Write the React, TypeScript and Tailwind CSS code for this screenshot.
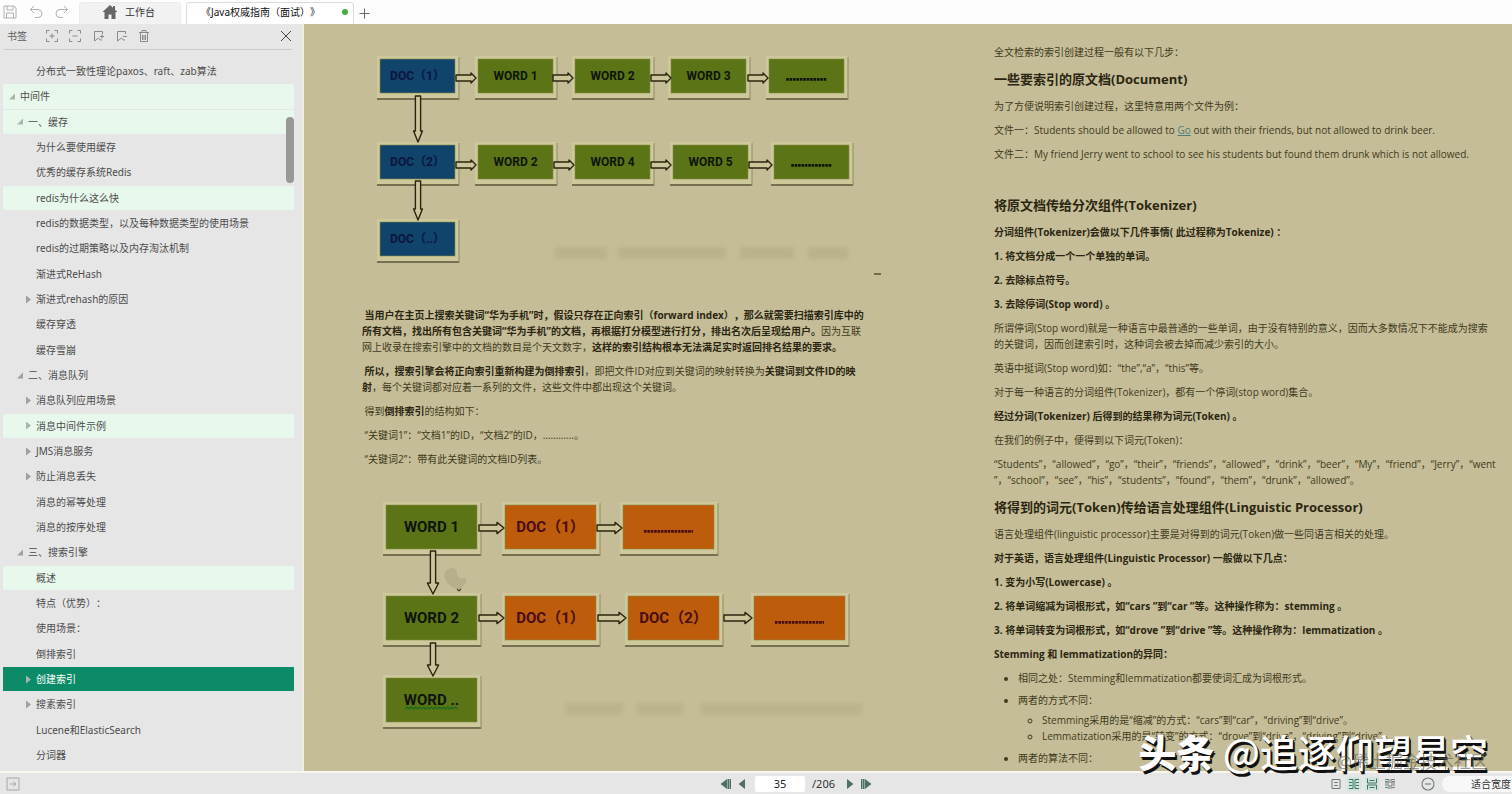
import type { ReactNode } from "react";

type Level = 0 | 1 | 2;
type Row = { text: string; level: Level; arrow?: "open" | "closed"; tone?: "mark" | "active" };

const rows: Row[] = [
  { text: "分布式一致性理论paxos、raft、zab算法", level: 2 },
  { text: "中间件", level: 0, arrow: "open", tone: "mark" },
  { text: "一、缓存", level: 1, arrow: "open", tone: "mark" },
  { text: "为什么要使用缓存", level: 2 },
  { text: "优秀的缓存系统Redis", level: 2 },
  { text: "redis为什么这么快", level: 2, tone: "mark" },
  { text: "redis的数据类型，以及每种数据类型的使用场景", level: 2 },
  { text: "redis的过期策略以及内存淘汰机制", level: 2 },
  { text: "渐进式ReHash", level: 2 },
  { text: "渐进式rehash的原因", level: 2, arrow: "closed" },
  { text: "缓存穿透", level: 2 },
  { text: "缓存雪崩", level: 2 },
  { text: "二、消息队列", level: 1, arrow: "open" },
  { text: "消息队列应用场景", level: 2, arrow: "closed" },
  { text: "消息中间件示例", level: 2, arrow: "closed", tone: "mark" },
  { text: "JMS消息服务", level: 2, arrow: "closed" },
  { text: "防止消息丢失", level: 2, arrow: "closed" },
  { text: "消息的幂等处理", level: 2 },
  { text: "消息的按序处理", level: 2 },
  { text: "三、搜索引擎", level: 1, arrow: "open" },
  { text: "概述", level: 2, tone: "mark" },
  { text: "特点（优势）：", level: 2 },
  { text: "使用场景：", level: 2 },
  { text: "倒排索引", level: 2 },
  { text: "创建索引", level: 2, arrow: "closed", tone: "active" },
  { text: "搜素索引", level: 2, arrow: "closed" },
  { text: "Lucene和ElasticSearch", level: 2 },
  { text: "分词器", level: 2 },
];

const indent = { 0: "pl-[5px]", 1: "pl-[13px]", 2: "pl-[21px]" };
const tones = {
  none: "text-[#4c4c4c]",
  mark: "rounded-xs bg-[#e8f8ec] text-[#4c4c4c]",
  active: "bg-[#0c8b68] text-white",
};

function OutlineRow({ text, level, arrow, tone }: Row) {
  return (
    <li className="flex min-h-0 flex-1 pb-px">
      <button type="button" className={`flex w-full items-center text-left whitespace-nowrap ${indent[level]} ${tones[tone ?? "none"]}`}>
        <svg width="12" height="9" viewBox="0 0 12 9" className="shrink-0" fill={tone ? "#a9b5ab" : "#a0a0a0"} aria-hidden="true">
          {arrow === "open" && <path d="M7 1.5v6H1z" />}
          {arrow === "closed" && <path d="M2 0.5v8l5-4z" />}
        </svg>
        {text}
      </button>
    </li>
  );
}

function ToolButton({ label, children }: { label: string; children: ReactNode }) {
  return (
    <button type="button" aria-label={label} className="shrink-0">
      <svg width="14" height="14" viewBox="0 0 14 14" fill="none" stroke="currentColor" strokeWidth="1">
        {children}
      </svg>
    </button>
  );
}

function Box({ x, y, w, h, fill, ink, label, size, wavy }: { x: number; y: number; w: number; h: number; fill: string; ink: string; label: string; size: number; wavy?: boolean }) {
  const dots = label === "dots";
  const cx = x + w / 2;
  return (
    <g>
      <rect x={x - 3} y={y - 3} width={w + 7} height={h + 8} fill="#cdc99c" />
      <path d={`M${x - 3} ${y + h + 6}H${x + w + 4}`} stroke="#777050" strokeWidth="2" />
      <path d={`M${x + w + 4} ${y - 2}V${y + h + 7}`} stroke="#8f8a63" strokeWidth="1" />
      <rect x={x} y={y} width={w} height={h} fill={fill} stroke="#8b8a45" strokeWidth="0.6" />
      {dots ? (
        <path d={`M${cx - w * 0.27} ${y + h * 0.6}H${cx + w * 0.27}`} stroke={ink} strokeWidth="2.8" strokeDasharray="2.6 0.8" />
      ) : (
        <text x={cx} y={y + h / 2 + size * 0.36} fontSize={size} fontWeight="700" textAnchor="middle" fill={ink}>
          {label}
        </text>
      )}
      {wavy && (
        <path d={`M${cx - 26} ${y + 31}${"l2 -2l2 2".repeat(13)}`} stroke="#176b1d" strokeWidth="1.2" fill="none" />
      )}
    </g>
  );
}

function Arrow({ x, y, len, down, big }: { x: number; y: number; len: number; down?: boolean; big?: boolean }) {
  const b = down ? 2.6 : 3;
  const s = big ? 5.6 : down ? 4.4 : 5;
  const head = down ? 11 : big ? 7 : 5;
  const n = len - head;
  const d = down
    ? `M${x - b} ${y}h${2 * b}v${n}h${s - b}l${-s} ${head}l${-s} ${-head}h${s - b}z`
    : `M${x} ${y - b}h${n}v${b - s}l${head} ${s}l${-head} ${s}v${b - s}h${-n}z`;
  return <path d={d} fill="#cdc69c" stroke="#2a240e" strokeWidth="1.4" strokeLinejoin="round" />;
}

const BLUE = "#10446a";
const GREEN = "#5a7416";
const ORANGE = "#bd5d0c";
const NAVY = "#0d1440";
const BLACK = "#10150a";
const MAROON = "#4a0d12";
const diagramFont = "[font-family:Roboto,'Noto_Sans_CJK_SC',sans-serif]";

function ForwardIndex() {
  const s = { w: 75, h: 34, size: 12 };
  return (
    <svg width="520" height="275" viewBox="362 24 520 275" className={`mb-2 block overflow-visible ${diagramFont}`} role="img" aria-label="正向索引">
      <Box {...s} x={380} y={59} fill={BLUE} ink={NAVY} label="DOC（1）" />
      <Box {...s} x={478} y={59} fill={GREEN} ink={BLACK} label="WORD 1" />
      <Box {...s} x={575} y={59} fill={GREEN} ink={BLACK} label="WORD 2" />
      <Box {...s} x={671} y={59} fill={GREEN} ink={BLACK} label="WORD 3" />
      <Box {...s} x={769} y={59} fill={GREEN} ink={BLACK} label="dots" />
      <Box {...s} x={380} y={145} fill={BLUE} ink={NAVY} label="DOC（2）" />
      <Box {...s} x={478} y={145} fill={GREEN} ink={BLACK} label="WORD 2" />
      <Box {...s} x={575} y={145} fill={GREEN} ink={BLACK} label="WORD 4" />
      <Box {...s} x={673} y={145} fill={GREEN} ink={BLACK} label="WORD 5" />
      <Box {...s} x={774} y={145} fill={GREEN} ink={BLACK} label="dots" />
      <Box {...s} x={380} y={222} fill={BLUE} ink={NAVY} label="DOC（..）" />
      <Arrow x={456} y={78} len={20} />
      <Arrow x={553} y={78} len={20} />
      <Arrow x={651} y={78} len={20} />
      <Arrow x={748} y={78} len={20} />
      <Arrow x={456} y={165} len={20} />
      <Arrow x={554} y={165} len={20} />
      <Arrow x={651} y={165} len={20} />
      <Arrow x={749} y={165} len={23} />
      <Arrow x={418} y={96} len={46} down />
      <Arrow x={418} y={181} len={39} down />
      <g fill="#b5ae88" className="opacity-70 blur-[2px]">
        <rect x="555" y="247" width="52" height="12" />
        <rect x="618" y="247" width="108" height="12" />
        <rect x="740" y="247" width="54" height="12" />
        <rect x="808" y="247" width="40" height="12" />
      </g>
      <path d="M874 274h7" stroke="#5a5022" strokeWidth="1.5" />
    </svg>
  );
}

function InvertedIndex() {
  const s = { w: 91, h: 44, size: 15 };
  return (
    <svg width="520" height="270" viewBox="362 475 520 270" className={`block overflow-visible ${diagramFont}`} role="img" aria-label="倒排索引">
      <Box {...s} x={386} y={505} fill={GREEN} ink={BLACK} label="WORD 1" />
      <Box {...s} x={505} y={505} fill={ORANGE} ink={MAROON} label="DOC（1）" />
      <Box {...s} x={623} y={505} fill={ORANGE} ink={MAROON} label="dots" />
      <Box {...s} x={386} y={596} fill={GREEN} ink={BLACK} label="WORD 2" />
      <Box {...s} x={505} y={596} fill={ORANGE} ink={MAROON} label="DOC（1）" />
      <Box {...s} x={628} y={596} fill={ORANGE} ink={MAROON} label="DOC（2）" />
      <Box {...s} x={754} y={596} fill={ORANGE} ink={MAROON} label="dots" />
      <Box {...s} x={386} y={678} fill={GREEN} ink={BLACK} label="WORD .." wavy />
      <Arrow x={479} y={528} len={25} big />
      <Arrow x={597} y={528} len={25} big />
      <Arrow x={479} y={618} len={25} big />
      <Arrow x={598} y={618} len={28} big />
      <Arrow x={724} y={618} len={28} big />
      <Arrow x={433} y={551} len={43} down big />
      <Arrow x={433} y={643} len={33} down big />
      <path d="M448 569c4-2 9-1 9 3c-1 5 3 7 8 6c3 2 1 7-3 8c1 2-1 4-4 3c-6-1-11-5-12-9c-3-4-2-9 2-11z" fill="#b0aa88" className="opacity-70" />
      <path d="M457 589l2 2l2-2" stroke="#5a3a22" strokeWidth="1.2" fill="none" />
      <g fill="#b5ae88" className="opacity-60 blur-[2px]">
        <rect x="565" y="703" width="58" height="12" />
        <rect x="636" y="703" width="48" height="12" />
        <rect x="700" y="703" width="162" height="12" />
      </g>
    </svg>
  );
}

function P({ bold, children }: { bold?: boolean; children: ReactNode }) {
  return <p className={bold ? "mb-2 font-bold text-[#2b2611]" : "mb-2"}>{children}</p>;
}

function H({ children }: { children: ReactNode }) {
  return <h2 className="mb-2 text-[13px]/[22px] font-bold text-[#2b2611]">{children}</h2>;
}

function B({ children }: { children: ReactNode }) {
  return <strong className="font-bold text-[#2b2611]">{children}</strong>;
}

export default function App() {
  return (
    <div className="relative flex h-screen flex-col overflow-hidden bg-[#e6e6e6] font-['Noto_Sans','Noto_Sans_CJK_SC',sans-serif] text-[10px]/[16px] text-[#4c4c4c] [text-spacing-trim:space-all]">
      <header className="flex h-6 shrink-0 items-end bg-[#fdfdfd]">
        <div className="flex h-6 w-[79px] shrink-0 items-center gap-3 pb-px pl-[3px] text-[#b0b0b0]">
          <ToolButton label="保存">
            <path d="M1 1h10l2 2v10H1zM4 1v4h6V1M3.500 13V8h7v5" />
          </ToolButton>
          <ToolButton label="撤销">
            <path d="M5 1L1.500 4.500L5 8M1.500 4.500H9a4 4 0 0 1 0 8H6" />
          </ToolButton>
          <ToolButton label="重做">
            <path d="M9 1l3.500 3.500L9 8M12.500 4.500H5a4 4 0 0 0 0 8h3" />
          </ToolButton>
        </div>
        <nav className="flex items-end gap-[5px]">
          <button type="button" className="flex h-[22px] w-[102px] items-center rounded-t-sm border border-b-0 border-[#ececec] bg-[#f2f2f2] pb-[3px] pl-[22px] text-[#333]">
            <svg width="16" height="14" viewBox="0 0 16 14" fill="#666" className="mr-[7px]" aria-hidden="true">
              <path d="M8 0L0.500 7h2v7h4V9.500h3V14h4V7h2L13 4.700V1h-2v1.800z" />
            </svg>
            工作台
          </button>
          <button type="button" className="flex h-[22px] w-[168px] items-center rounded-t-sm border border-b-0 border-[#dcdcdc] bg-white pb-[3px] pl-[14px] text-[#111]">
            <span>《Java权威指南（面试）》</span>
            <span className="mr-[5px] ml-auto size-[6px] rounded-full bg-[#3fae3c]" />
          </button>
        </nav>
        <button type="button" aria-label="新建标签" className="ml-[5px] flex h-[22px] items-center text-[#666]">
          <svg width="11" height="11" viewBox="0 0 11 11" fill="none" stroke="currentColor">
            <path d="M5.500 0.500v10M0.500 5.500h10" />
          </svg>
        </button>
      </header>

      <div className="flex min-h-0 flex-1">
        <aside className="relative flex w-[304px] shrink-0 flex-col border-r-2 border-[#efece0]">
          <div className="mr-[10px] ml-1 flex h-[26px] shrink-0 items-center border-b border-[#c9c9c9] pb-px pl-[3px] text-[#8a8a8a]">
            <h1 className="mr-[18px] text-[#5c5c5c]">书签</h1>
            <div className="flex flex-1 items-center gap-[9px]">
              <ToolButton label="展开">
                <path d="M1.500 4.500v-3h3M9.500 1.500h3v3M12.500 9.500v3h-3M4.500 12.500h-3v-3M7 4.500v5M4.500 7h5" />
              </ToolButton>
              <ToolButton label="收起">
                <path d="M1.500 4.500v-3h3M9.500 1.500h3v3M12.500 9.500v3h-3M4.500 12.500h-3v-3M4.500 7h5" />
              </ToolButton>
              <ToolButton label="添加书签">
                <path d="M11.500 5V2.500h-8v9.500l4-3l2.500 2.500V10M9 7.500h4M11 5.500v4" />
              </ToolButton>
              <ToolButton label="移除书签">
                <path d="M11.500 5V2.500h-8v9.500l4-3l2.500 2.500V10M9 7.500h4" />
              </ToolButton>
              <ToolButton label="删除">
                <path d="M2 3.500h10M5 3V1.500h4V3M3.500 4v8.500h7V4M5.500 6v5M7 6v5M8.500 6v5" />
              </ToolButton>
            </div>
            <button type="button" aria-label="关闭" className="text-[#444]">
              <svg width="12" height="12" viewBox="0 0 12 12" fill="none" stroke="currentColor">
                <path d="M1 1l10 10M11 1L1 11" />
              </svg>
            </button>
          </div>
          <ul className="mt-[9px] mr-2 mb-[3px] ml-[3px] flex min-h-0 flex-1 flex-col">
            {rows.map((row) => (
              <OutlineRow key={row.text} {...row} />
            ))}
          </ul>
          <span className="absolute top-[93px] right-2 h-[66px] w-2 rounded-full bg-[#989898]" />
        </aside>

        <main className="flex min-w-0 flex-1 overflow-hidden bg-[#c5bd97] pl-[58px] font-['Open_Sans','Noto_Sans_CJK_SC',sans-serif] whitespace-nowrap text-[#3f3a1c]">
          <article className="w-[632px] shrink-0">
            <ForwardIndex />
            <P>
              {"\u00a0"}
              <B>
                当用户在主页上搜索关键词“华为手机”时，假设只存在正向索引（forward index），那么就需要扫描索引库中的
                <br />
                所有文档，找出所有包含关键词“华为手机”的文档，再根据打分模型进行打分，排出名次后呈现给用户。
              </B>
              因为互联
              <br />
              网上收录在搜索引擎中的文档的数目是个天文数字，<B>这样的索引结构根本无法满足实时返回排名结果的要求。</B>
            </P>
            <P>
              {"\u00a0"}
              <B>所以，搜索引擎会将正向索引重新构建为倒排索引</B>，即把文件ID对应到关键词的映射转换为<B>关键词到文件ID的映</B>
              <br />
              <B>射</B>，每个关键词都对应着一系列的文件，这些文件中都出现这个关键词。
            </P>
            <P>
              {"\u00a0"}得到<B>倒排索引</B>的结构如下：
            </P>
            <P>{"\u00a0"}“关键词1”：“文档1”的ID，“文档2”的ID，…………。</P>
            <P>{"\u00a0"}“关键词2”：带有此关键词的文档ID列表。</P>
            <InvertedIndex />
          </article>

          <article className="w-[520px] shrink-0 pt-5">
            <P>全文检索的索引创建过程一般有以下几步：</P>
            <H>一些要索引的原文档(Document)</H>
            <P>为了方便说明索引创建过程，这里特意用两个文件为例：</P>
            <P>
              文件一：Students should be allowed to{" "}
              <a href="#go" className="text-[#4d8078] underline">
                Go
              </a>{" "}
              out with their friends, but not allowed to drink beer.
            </P>
            <P>文件二：My friend Jerry went to school to see his students but found them drunk which is not allowed.</P>
            <P>{"\u00a0"}</P>
            <H>将原文档传给分次组件(Tokenizer)</H>
            <P bold>分词组件(Tokenizer)会做以下几件事情( 此过程称为Tokenize) ：</P>
            <P bold>1. 将文档分成一个一个单独的单词。</P>
            <P bold>2. 去除标点符号。</P>
            <P bold>3. 去除停词(Stop word) 。</P>
            <P>
              所谓停词(Stop word)就是一种语言中最普通的一些单词，由于没有特别的意义，因而大多数情况下不能成为搜索
              <br />
              的关键词，因而创建索引时，这种词会被去掉而减少索引的大小。
            </P>
            <P>英语中挺词(Stop word)如：“the”,“a”，“this”等。</P>
            <P>对于每一种语言的分词组件(Tokenizer)，都有一个停词(stop word)集合。</P>
            <P bold>经过分词(Tokenizer) 后得到的结果称为词元(Token) 。</P>
            <P>在我们的例子中，便得到以下词元(Token)：</P>
            <P>
              “Students”，“allowed”，“go”，“their”，“friends”，“allowed”，“drink”，“beer”，“My”，“friend”，“Jerry”，“went
              <br />
              ”，“school”，“see”，“his”，“students”，“found”，“them”，“drunk”，“allowed”。
            </P>
            <H>将得到的词元(Token)传给语言处理组件(Linguistic Processor)</H>
            <P>语言处理组件(linguistic processor)主要是对得到的词元(Token)做一些同语言相关的处理。</P>
            <P bold>对于英语，语言处理组件(Linguistic Processor) 一般做以下几点：</P>
            <P bold>1. 变为小写(Lowercase) 。</P>
            <P bold>2. 将单词缩减为词根形式，如“cars ”到“car ”等。这种操作称为：stemming 。</P>
            <P bold>3. 将单词转变为词根形式，如“drove ”到“drive ”等。这种操作称为：lemmatization 。</P>
            <P bold>Stemming 和 lemmatization的异同：</P>
            <ul className="flex list-disc flex-col gap-[6px] pl-6">
              <li>相同之处：Stemming和lemmatization都要使词汇成为词根形式。</li>
              <li>
                两者的方式不同：
                <ul className="mt-1 list-[circle] pl-6">
                  <li>Stemming采用的是“缩减”的方式：“cars”到“car”，“driving”到“drive”。</li>
                  <li>Lemmatization采用的是“转变”的方式：“drove”到“drive”，“driving”到“drive”。</li>
                </ul>
              </li>
              <li>两者的算法不同：</li>
            </ul>
          </article>
        </main>
      </div>

      <footer className="flex h-[23px] shrink-0 items-center border-t-2 border-[#f8f6ee]">
        <div className="flex flex-1 pl-[6px] text-[#a0a8a4]">
          <ToolButton label="侧栏">
            <path d="M1 1h12v12H1zM4 7h6M7.500 4.500L10 7L7.500 9.500" />
          </ToolButton>
        </div>
        <div className="ml-[74px] flex w-[152px] items-center text-[#4f6f69]">
          <button type="button" aria-label="第一页">
            <svg width="12" height="12" viewBox="0 0 12 12" fill="currentColor">
              <path d="M7 1v10L0.500 6zM7.500 1h1.500v10H7.500zM9.500 1h1.500v10h-1.500z" />
            </svg>
          </button>
          <button type="button" aria-label="上一页" className="ml-[6px]">
            <svg width="8" height="12" viewBox="0 0 8 12" fill="currentColor">
              <path d="M7 1v10L0.500 6z" />
            </svg>
          </button>
          <input aria-label="页码" defaultValue="35" className="ml-[9px] h-4 w-[50px] rounded-xs bg-white text-center text-[11px] text-[#222]" />
          <span className="ml-[7px] text-[11px] text-[#333]">/206</span>
          <button type="button" aria-label="下一页" className="ml-auto">
            <svg width="8" height="12" viewBox="0 0 8 12" fill="currentColor">
              <path d="M1 1v10L7.500 6z" />
            </svg>
          </button>
          <button type="button" aria-label="最后一页" className="ml-[6px]">
            <svg width="12" height="12" viewBox="0 0 12 12" fill="currentColor">
              <path d="M5 1v10L11.500 6zM3 1h1.500v10H3zM1 1h1.500v10H1z" />
            </svg>
          </button>
        </div>
        <div className="flex flex-1 items-center justify-end text-[#6f7f7a]">
          <div className="flex gap-1">
            <ToolButton label="单页">
              <path d="M3 2.500h8v9H3zM5 5.500h4M5 8.500h4" />
            </ToolButton>
            <span className="flex rounded-xs bg-[#d2e4dc] text-[#3e7767]">
              <ToolButton label="双页">
                <path d="M2 2.500h4v9H2M12 2.500H8v9h4M2 5.500h3M2 8.500h3M9 5.500h3M9 8.500h3" />
              </ToolButton>
            </span>
            <span className="flex rounded-xs bg-[#d2e4dc] text-[#3e7767]">
              <ToolButton label="连续">
                <path d="M2.500 1.500V6h9V1.500M2.500 12.500V8h9v4.500M4.500 3.500h5M4.500 10.500h5" />
              </ToolButton>
            </span>
            <ToolButton label="双页连续">
              <path d="M2 2.500h4V6H2M12 2.500H8V6h4M2 8h4v4M12 8H8v4M2 4.500h3M9 4.500h3M2 10.500h3M9 10.500h3" />
            </ToolButton>
          </div>
          <button type="button" aria-label="缩小" className="mr-[7px] ml-6">
            <svg width="14" height="14" viewBox="0 0 14 14" fill="none" stroke="currentColor" strokeWidth="1.100">
              <circle cx="7" cy="7" r="6" />
              <path d="M4 7h6" />
            </svg>
          </button>
          <select aria-label="缩放" className="h-4 w-[70px] appearance-none rounded-l-full bg-[#f8f8f8] pl-[29px] text-[10px] text-[#333]">
            <option>适合宽度</option>
          </select>
        </div>
      </footer>

      <div className="pointer-events-none absolute right-6 bottom-5 font-['Noto_Sans_CJK_SC',sans-serif] text-[38px]/[46px] font-medium whitespace-nowrap text-white [text-shadow:2px_3px_0_#111,1px_1px_0_#111]">
        <span className="font-black">头条</span> @追逐仰望星空
      </div>
      <div className="pointer-events-none absolute right-6 bottom-[22px] text-[17px]/[20px] whitespace-nowrap text-[#5c5a50] opacity-60">@稀土掘金技术社区</div>
    </div>
  );
}
